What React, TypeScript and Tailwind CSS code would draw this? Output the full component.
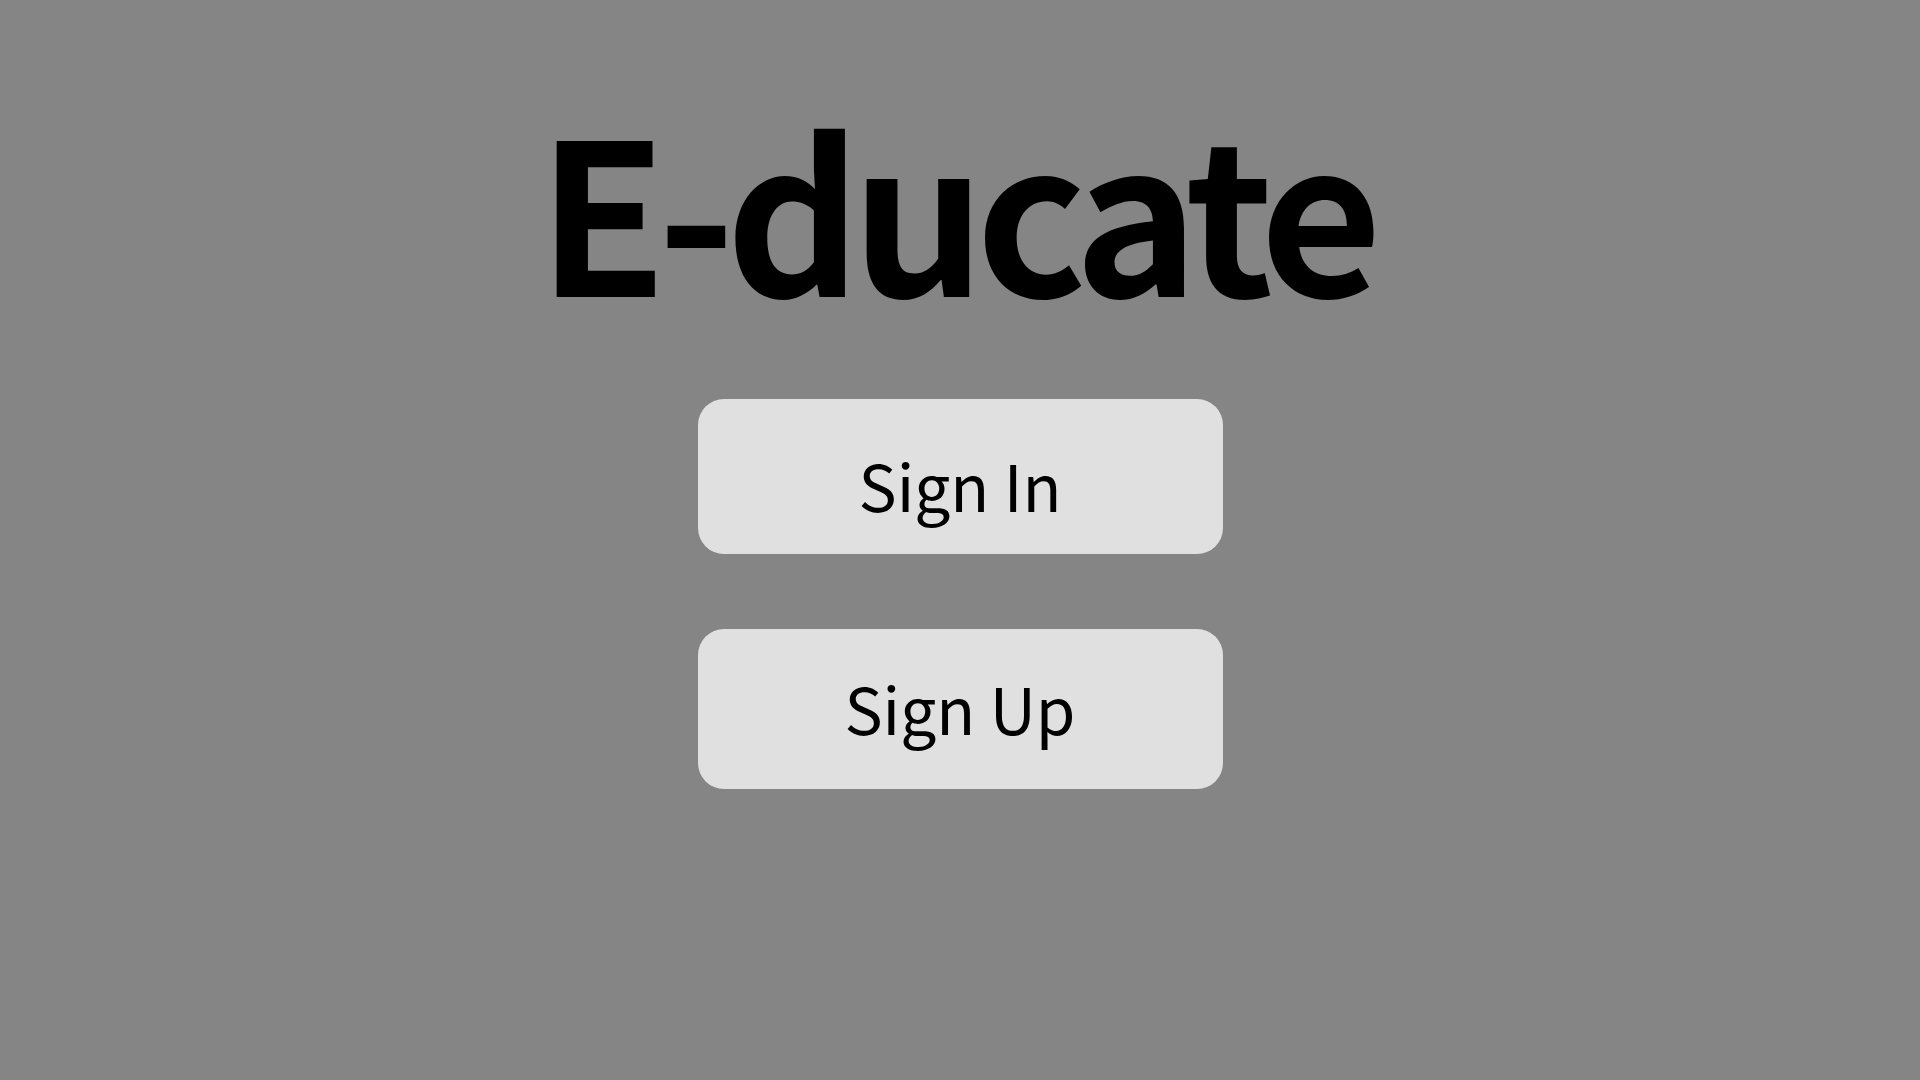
export default function App() {
  return (
    <main
      className="flex min-h-screen flex-col items-center bg-[#858585] pt-[100px] text-black"
      style={{ fontFamily: '"Noto Sans CJK SC", "Noto Sans", sans-serif' }}
    >
      <h1 className="pr-[10px] text-[211px] font-bold leading-none tracking-[-10px]">E-ducate</h1>

      <div className="mt-[88px] flex flex-col gap-[75px]">
        <button
          type="button"
          className="flex h-[155px] w-[525px] items-start justify-center rounded-[26px] bg-[#e0e0e0] pt-[53px]"
        >
          <span className="block text-[64px] font-normal leading-none">Sign In</span>
        </button>
        <button
          type="button"
          className="flex h-[160px] w-[525px] items-start justify-center rounded-[26px] bg-[#e0e0e0] pt-[46px]"
        >
          <span className="block text-[64px] font-normal leading-none">Sign Up</span>
        </button>
      </div>
    </main>
  );
}
